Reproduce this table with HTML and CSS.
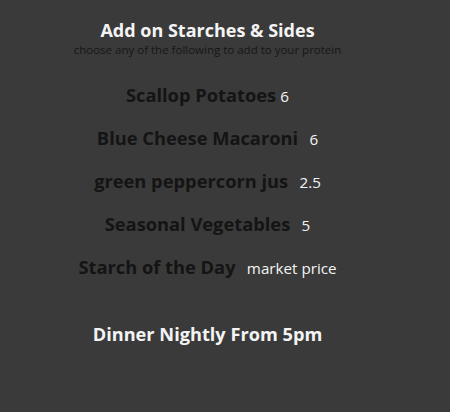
FILE: index.html
```html
<!DOCTYPE html>
<html>
<head>
<meta charset="utf-8">
<link rel="stylesheet" href="styles.css">
</head>
<body>
<div class="menu">
  <h2 class="title">Add on Starches &amp; Sides</h2>
  <p class="subtitle">choose any of the following to add to your protein</p>
  <ul class="items">
    <li class="item"><span class="name">Scallop Potatoes</span> <span class="price">6</span></li>
    <li class="item"><span class="name">Blue Cheese Macaroni</span>&nbsp; <span class="price spaced">6</span></li>
    <li class="item"><span class="name">green peppercorn jus</span>&nbsp; <span class="price spaced">2.5</span></li>
    <li class="item"><span class="name">Seasonal Vegetables</span>&nbsp; <span class="price spaced">5</span></li>
    <li class="item"><span class="name">Starch of the Day</span>&nbsp; <span class="price spaced">market price</span></li>
  </ul>
  <h2 class="footer">Dinner Nightly From 5pm</h2>
</div>
</body>
</html>
```
FILE: styles.css
```css
html, body {
  margin: 0;
  padding: 0;
  background: #3a3a3a;
  height: 100%;
}
body {
  font-family: "Open Sans", "Liberation Sans", sans-serif;
}
.menu {
  width: 415px;
  text-align: center;
  padding-top: 18px;
}
.title {
  margin: 0;
  font-size: 18px;
  font-weight: 700;
  color: #f4f4f4;
  line-height: 24px;
}
.subtitle {
  margin: 0;
  font-size: 11.5px;
  color: #161616;
  line-height: 16px;
}
.items {
  list-style: none;
  margin: 25px 0 0;
  padding: 0;
  display: flex;
  flex-direction: column;
  gap: 18px;
}
.item {
  line-height: 24px;
}
.name {
  font-size: 18.3px;
  font-weight: 700;
  color: #141414;
}
.price {
  font-size: 15.2px;
  color: #f4f4f4;
}
.price.spaced {
  margin-left: 3px;
}
.footer {
  margin: 42px 0 0;
  font-size: 18.2px;
  font-weight: 700;
  color: #f4f4f4;
  line-height: 24px;
}
```
